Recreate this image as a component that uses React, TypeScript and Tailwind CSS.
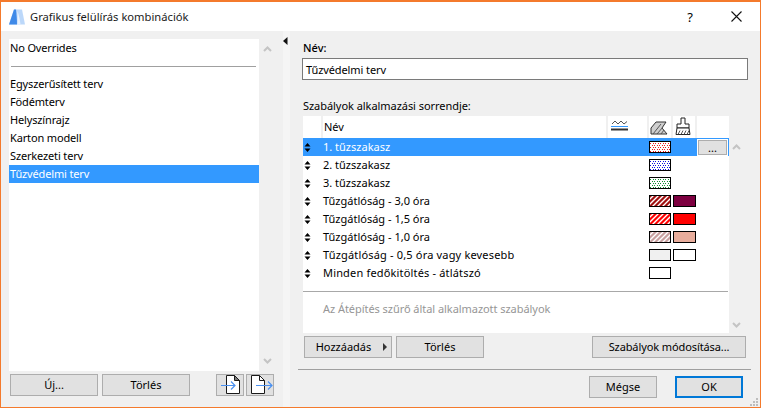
const rules = [
  { name: "1. tűzszakasz", fill: "dots-red", selected: true },
  { name: "2. tűzszakasz", fill: "dots-blue" },
  { name: "3. tűzszakasz", fill: "dots-green" },
  { name: "Tűzgátlóság - 3,0 óra", fill: "hatch-dark", bg: "bg-[#7d0040]" },
  { name: "Tűzgátlóság - 1,5 óra", fill: "hatch-red", bg: "bg-[#ff0000]" },
  { name: "Tűzgátlóság - 1,0 óra", fill: "hatch-pink", bg: "bg-[#e8ad9c]" },
  { name: "Tűzgátlóság - 0,5 óra vagy kevesebb", fill: "plain-grey", bg: "bg-white", wide: true },
  { name: "Minden fedőkitöltés - átlátszó", fill: "plain-white", wide: true },
];

const plans = ["Egyszerűsített terv", "Födémterv", "Helyszínrajz", "Karton modell", "Szerkezeti terv", "Tűzvédelmi terv"];

const Btn = ({ className, focused, children }: { className: string; focused?: boolean; children: React.ReactNode }) => (
  <div
    className={`h-[22px] pb-px flex items-center justify-center bg-[#e1e1e1] text-black ${
      focused ? "border-2 border-[#0078d7]" : "border border-[#adadad]"
    } ${className}`}
  >
    {children}
  </div>
);

const Swatch = ({ fill }: { fill: string }) => {
  const dot = { "dots-red": "#f01820", "dots-blue": "#1010e0", "dots-green": "#109030" }[fill];
  const hatch = { "hatch-dark": ["#a01010", "#ffffff"], "hatch-red": ["#ff0000", "#ffffff"], "hatch-pink": ["#c9a0a0", "#ffffff"] }[fill];
  return (
    <svg width="22" height="12" viewBox="0 0 22 12" className="block">
      <rect x="0" y="0" width="22" height="12" fill={fill === "plain-grey" ? "#f0f0f0" : "#ffffff"} />
      {dot && (
        <>
          <pattern id={fill} width="5" height="4" patternUnits="userSpaceOnUse">
            <rect x="0" y="0" width="1" height="1" fill={dot} />
            <rect x="3" y="0" width="1" height="1" fill={dot} />
            <rect x="1" y="2" width="1" height="1" fill={dot} />
            <rect x="4" y="2" width="1" height="1" fill={dot} />
          </pattern>
          <rect x="1" y="1" width="20" height="10" fill={`url(#${fill})`} />
        </>
      )}
      {hatch && (
        <>
          <rect x="0" y="0" width="22" height="12" fill={hatch[0]} />
          <path d="M-2 12L10 0M3 12L15 0M8 12L20 0M13 12L25 0M18 12L30 0M-7 12L5 0" stroke={hatch[1]} strokeWidth="1.4" />
        </>
      )}
      <rect x="0.5" y="0.5" width="21" height="11" fill="none" stroke="#000" />
    </svg>
  );
};

const Sort = () => (
  <svg width="7" height="9" viewBox="0 0 7 9" className="block ml-[1px]">
    <path d="M3.5 0L6.5 3.5H0.5Z M3.5 9L0.5 5.5H6.5Z" fill="#000" />
  </svg>
);

const Chevron = ({ down }: { down?: boolean }) => (
  <svg width="9" height="6" viewBox="0 0 9 6" className="block">
    <path d={down ? "M1 1L4.5 4.5L8 1" : "M1 5L4.5 1.5L8 5"} fill="none" stroke="#c4c4c4" strokeWidth="2" />
  </svg>
);

const DocIcon = ({ out }: { out?: boolean }) => (
  <svg width="26" height="20" viewBox="0 0 26 20" className="block">
    <path
      d={out ? "M4.5 0.5H12.5L17.5 5.5V18.5H4.5Z" : "M9.5 0.5H17.5L22.5 5.5V18.5H9.5Z"}
      fill="#fff"
      stroke="#1a1a1a"
      strokeWidth="1"
    />
    {out ? <path d="M12.5 0.5V5.5H17.5" fill="none" stroke="#1a1a1a" /> : <path d="M17.5 0.5V5.5H22.5Z" fill="#777" stroke="#1a1a1a" />}
    <path
      d={out ? "M9 10.5H25M21 6.5L25 10.5L21 14.5" : "M4 10.5H18M14 6.5L18 10.5L14 14.5"}
      fill="none"
      stroke="#4a90f0"
      strokeWidth="1.2"
    />
  </svg>
);

export default function App() {
  return (
    <div className="relative w-[761px] h-[408px] flex flex-col bg-[#f0f0f0] border-x border-b border-t-2 border-[#f47a2c] font-['Noto_Sans',sans-serif] text-[11px] leading-[14px] text-black overflow-hidden">
      {/* Title bar */}
      <div className="h-[29px] shrink-0 bg-white flex items-center">
        <svg width="16" height="16" viewBox="0 0 16 16" className="ml-[8px] mt-[1px]">
          <path d="M0 15.5L5 0.5H13L16 15.5Z" fill="#bcd8fa" />
          <path d="M0 15.5L5 0.5H7C7.6 6 8 11 8 15.5Z" fill="#3f8ae8" />
          <path d="M8.5 15.5C8.6 11 8.6 6 8.4 2C10 6 11 11 11.5 15.5Z" fill="#eaf2fd" />
        </svg>
        <span className="ml-[5px] text-[11.2px] text-[#1a1a1a]">Grafikus felülírás kombinációk</span>
        <span className="ml-auto w-[46px] text-center text-[13px]">?</span>
        <div className="w-[46px] flex justify-center mr-[1px]">
          <svg width="11" height="11" viewBox="0 0 11 11">
            <path d="M0.5 0.5L10.5 10.5M10.5 0.5L0.5 10.5" stroke="#111" strokeWidth="1.1" />
          </svg>
        </div>
      </div>

      <div className="flex-1 flex min-h-0">
        {/* Left panel */}
        <div className="w-[282px] shrink-0 flex flex-col pl-[8px]">
          <div className="flex h-[332px] mt-[8px]">
            <div className="w-[250px] bg-white flex flex-col tracking-[-0.15px]">
              <div className="h-[18px] pl-[1px] flex items-center">No Overrides</div>
              <div className="h-px bg-[#a0a0a0] ml-[2px] mr-[3px] mt-[9px] mb-[8px]" />
              {plans.map((p) => (
                <div
                  key={p}
                  className={`h-[18px] pl-[1px] flex items-center ${p === "Tűzvédelmi terv" ? "bg-[#3399ff] text-white" : ""}`}
                >
                  {p}
                </div>
              ))}
            </div>
            <div className="flex-1 flex flex-col items-center justify-between py-[7px] pr-[8px]">
              <Chevron />
              <Chevron down />
            </div>
          </div>
          <div className="flex mt-[3px] pl-[1px]">
            <Btn className="w-[88px]">Új...</Btn>
            <Btn className="w-[88px] ml-[4px]">Törlés</Btn>
            <Btn className="w-[28px] ml-[26px]"><DocIcon /></Btn>
            <Btn className="w-[28px] ml-[2px]"><DocIcon out /></Btn>
          </div>
        </div>

        {/* Splitter */}
        <div className="w-[7px] shrink-0 bg-[#f5f5f5]">
          <svg width="5" height="8" viewBox="0 0 5 8" className="mt-[6px] ml-0">
            <path d="M4.5 0V8L0 4Z" fill="#111" />
          </svg>
        </div>

        {/* Right panel */}
        <div className="flex-1 flex flex-col pl-[12px] pr-[11px] min-w-0">
          <div className="mt-[10px] pl-[1px] h-[14px] font-medium">Név:</div>
          <div className="mt-[3px] h-[22px] mr-[1px] pt-px bg-white border border-[#7a7a7a] flex items-center pl-[3px] tracking-[-0.1px]">Tűzvédelmi terv</div>
          <div className="mt-[19px] pl-[1px] h-[14px] flex items-center tracking-[-0.05px]">Szabályok alkalmazási sorrendje:</div>

          <div className="flex mt-[3px] h-[217px]">
            <div className="w-[426px] bg-white flex flex-col ml-[1px]">
              <div className="h-[22px] flex items-stretch shrink-0">
                <div className="w-[20px] border-r-2 border-[#f0f0f0]" />
                <div className="w-[285px] pl-[1px] flex items-center border-r-2 border-[#f0f0f0]">Név</div>
                <div className="w-[41px] border-r-2 border-[#f0f0f0] flex justify-start pt-[3px] pl-[3px]">
                  <svg width="17" height="13" viewBox="0 0 17 13" className="block">
                    <path d="M1 5L4 2L7 5L10 2L13 5L16 2.5" fill="none" stroke="#555" />
                    <path d="M0 7.5H17" stroke="#3399ff" />
                    <path d="M0 10.5H17" stroke="#333" strokeWidth="2" />
                  </svg>
                </div>
                <div className="w-[24px] border-r-2 border-[#f0f0f0] flex justify-center pt-[5px] pr-[2px]">
                  <svg width="18" height="14" viewBox="0 0 18 14" className="block">
                    <path d="M1 13V7L6 1H16L12 7L17 13Z" fill="#cfcfcf" stroke="#333" />
                    <path d="M3 13L11 3M7 13L13 6M11 13L14 9" stroke="#555" />
                  </svg>
                </div>
                <div className="w-[24px] border-r-2 border-[#f0f0f0] flex justify-center pt-[1px] pr-[2px]">
                  <svg width="16" height="19" viewBox="0 0 16 19" className="block">
                    <path d="M6 1H10V7H14V11H2V7H6Z" fill="#fff" stroke="#222" />
                    <path d="M2 11H14L15 17.5H1Z" fill="#fff" stroke="#222" />
                    <path d="M3 17.5L5 13.5M6 17.5L8 13.5M9 17.5L11 13.5M12 17.5L14 13.5" stroke="#555" />
                  </svg>
                </div>
              </div>
              {rules.map((r) => (
                <div key={r.name} className={`h-[18px] flex items-center shrink-0 ${r.selected ? "bg-[#3399ff] text-white" : ""}`}>
                  <div className="w-[20px] flex"><Sort /></div>
                  <div className={`w-[326px] ${r.wide ? "tracking-[0.17px]" : ""}`}>{r.name}</div>
                  <Swatch fill={r.fill} />
                  {r.bg && <div className={`w-[23px] h-[12px] ml-[2px] border border-black ${r.bg}`} />}
                  {r.selected && (
                    <div className="ml-auto mr-[1px] w-[31px] h-[17px] bg-[#e1e1e1] border border-white outline outline-1 -outline-offset-2 outline-[#adadad] flex items-end justify-center text-black leading-[12px] pb-[1px]">
                      ...
                    </div>
                  )}
                </div>
              ))}
              <div className="h-px bg-[#a8a8a8] mt-[9px] mr-[1px]" />
              <div className="mt-[10px] pl-[20px] text-[#969696] tracking-[-0.05px]">Az Átépítés szűrő által alkalmazott szabályok</div>
            </div>
            <div className="w-[19px] flex flex-col items-center justify-between pt-[28px] pb-[5px] pr-[4px]">
              <Chevron />
              <Chevron down />
            </div>
          </div>

          <div className="flex mt-[3px] ml-[2px] pr-[3px]">
            <Btn className="w-[88px] relative pr-[9px]">
              Hozzáadás
              <svg width="4" height="8" viewBox="0 0 4 8" className="absolute right-[4px] top-[6px]">
                <path d="M0 0L4 4L0 8Z" fill="#333" />
              </svg>
            </Btn>
            <Btn className="w-[88px] ml-[4px]">Törlés</Btn>
            <Btn className="w-[154px] ml-auto tracking-[-0.1px]">Szabályok módosítása...</Btn>
          </div>

          <div className="h-px bg-[#a0a0a0] mt-[11px] -ml-[4px] -mr-[2px]" />

          <div className="flex justify-end mt-[6px] pr-[6px]">
            <Btn className="w-[68px]">Mégse</Btn>
            <Btn focused className="w-[68px] ml-[18px]">OK</Btn>
          </div>
        </div>
      </div>

      {/* Resize grip */}
      <svg width="8" height="8" viewBox="0 0 8 8" className="absolute right-[2px] bottom-[1px]">
        <path d="M6 0h2v2H6zM3 3h2v2H3zM6 3h2v2H6zM0 6h2v2H0zM3 6h2v2H3zM6 6h2v2H6z" fill="#bdbdbd" />
      </svg>
    </div>
  );
}
